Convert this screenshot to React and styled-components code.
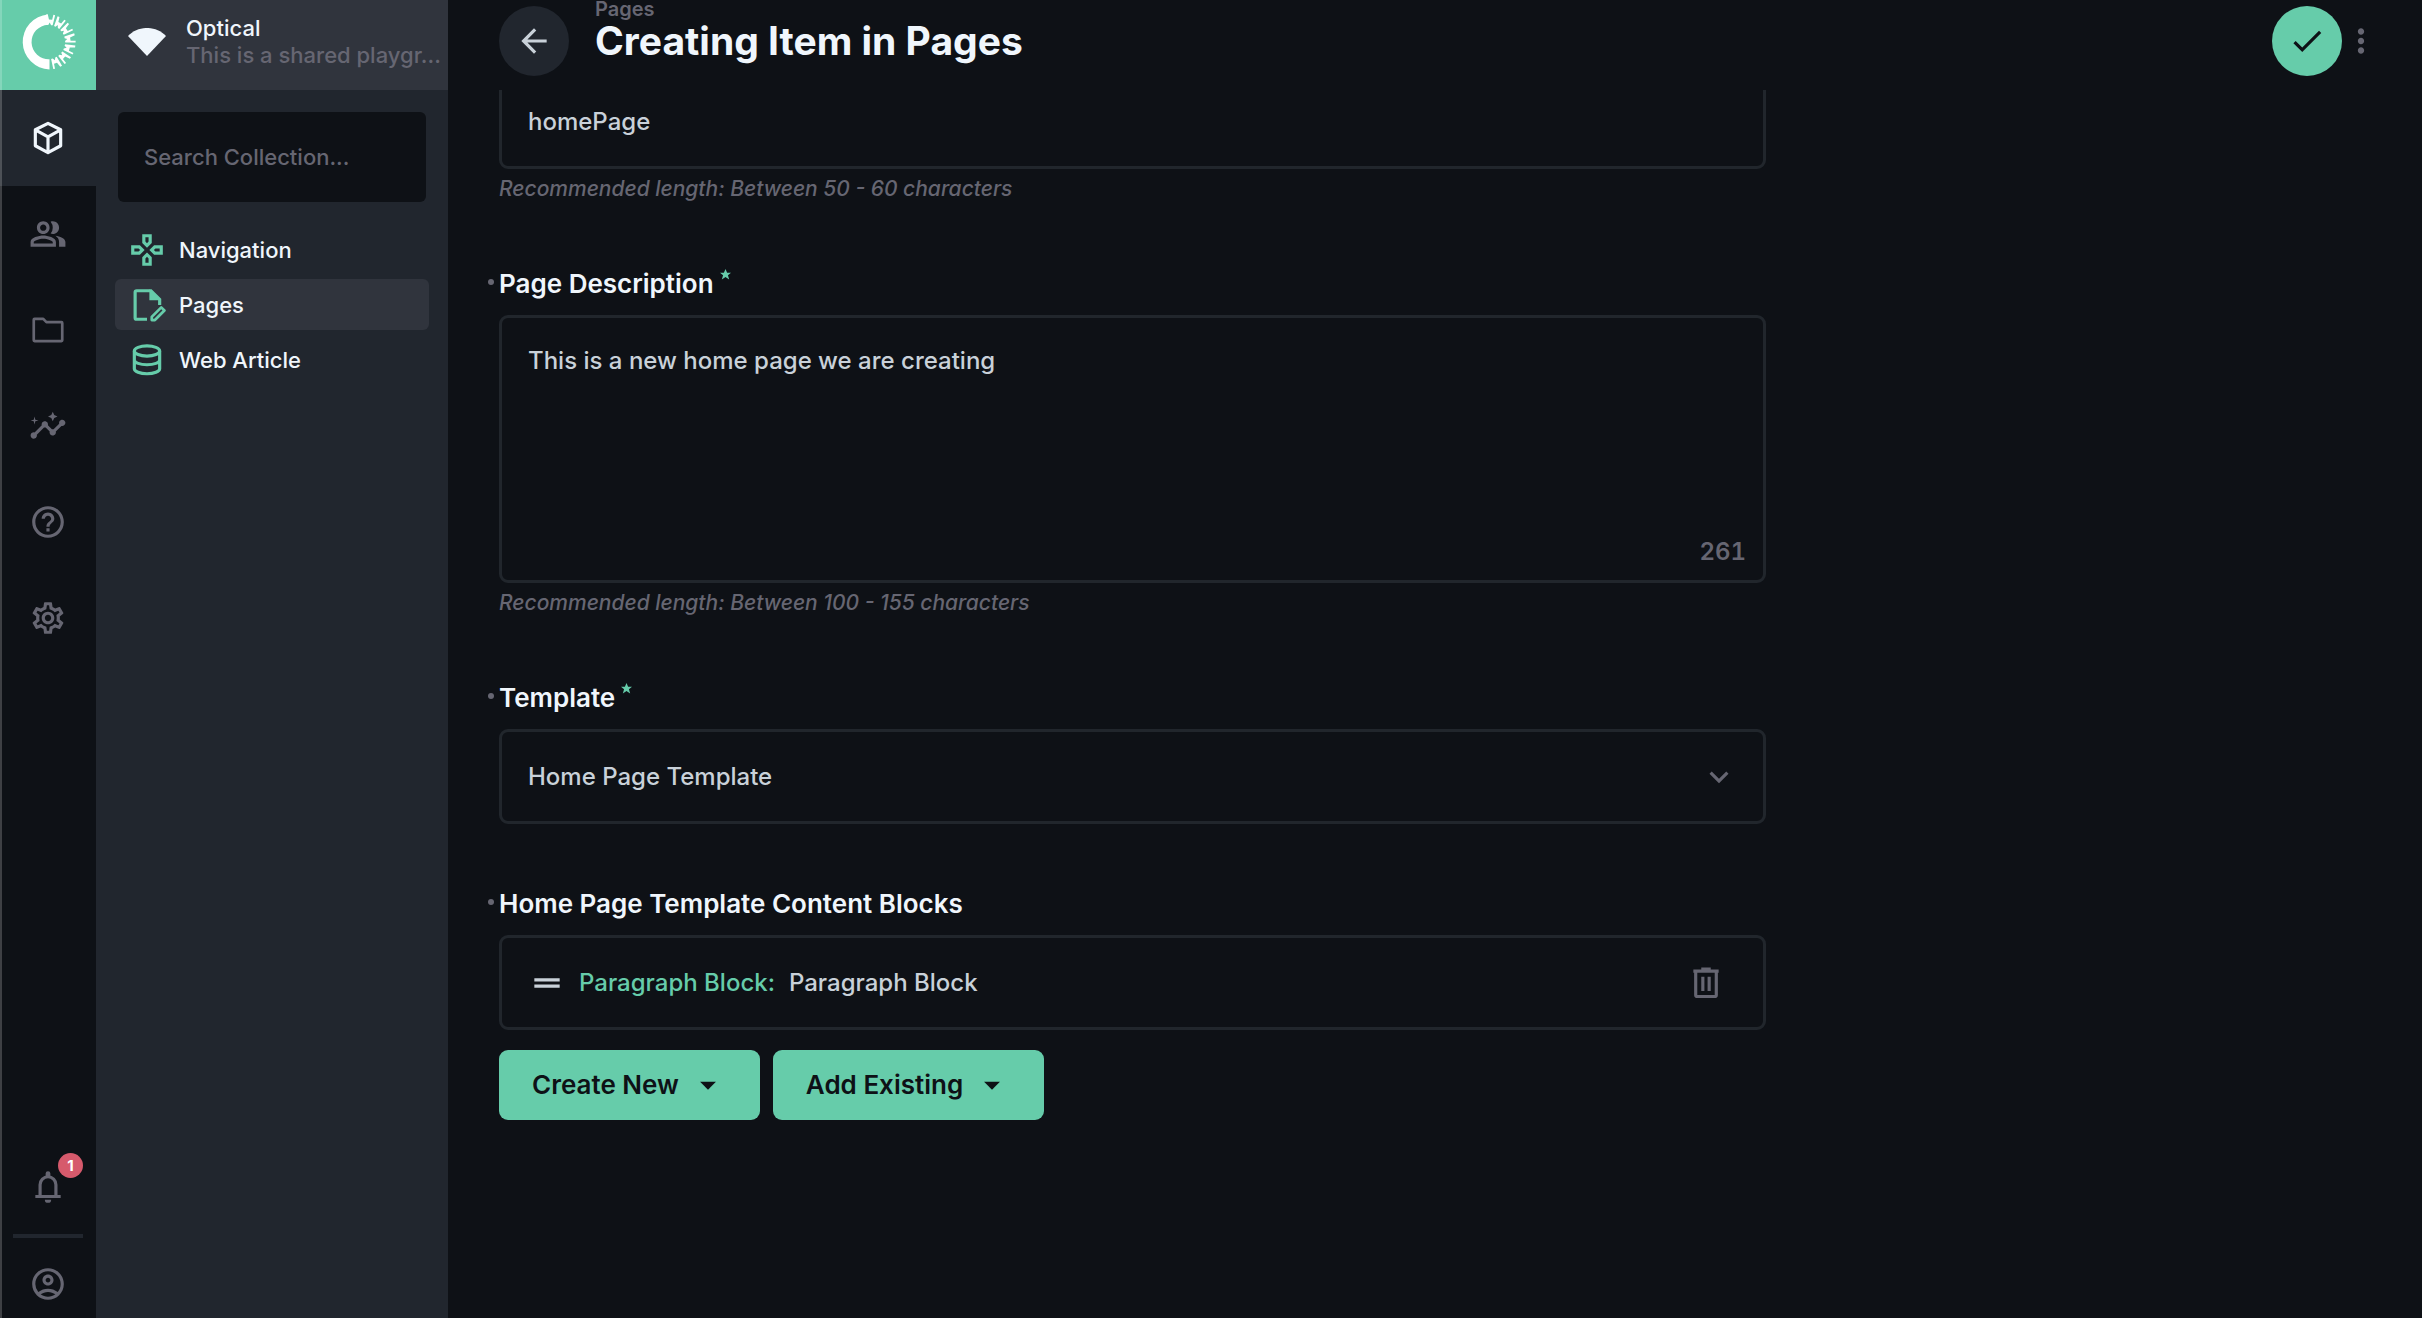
import { useState } from 'react';
import styled, { createGlobalStyle, css } from 'styled-components';
import {
    MdArrowBack,
    MdArrowDropDown,
    MdCheck,
    MdDragHandle,
    MdExpandMore,
    MdHelpOutline,
    MdInsights,
    MdMoreVert,
    MdOutlineAccountCircle,
    MdOutlineGamepad,
    MdOutlinePeopleAlt,
    MdOutlineSettings,
} from 'react-icons/md';

const GlobalStyle = createGlobalStyle`
    :root {
        --page: #0e1116;
        --subtle: #21262e;
        --normal: #30343d;
        --border: #21262c;
        --primary: #66ccaa;
        --danger: #d65a6c;
        --fg: #c9d1d9;
        --fg-strong: #f0f6fc;
        --fg-subdued: #666672;
    }

    * {
        box-sizing: border-box;
    }

    body {
        margin: 0;
        background: var(--page);
        color: var(--fg);
        font-family: Inter, 'Liberation Sans', sans-serif;
        font-size: 24px;
        font-weight: 500;
        line-height: 30px;
    }

    button,
    input,
    textarea,
    select {
        font: inherit;
        color: inherit;
        margin: 0;
    }

    button {
        border: 0;
        padding: 0;
        background: none;
        cursor: pointer;
    }

    svg {
        display: block;
        flex-shrink: 0;
    }
`;

const Layout = styled.div`
    display: grid;
    grid-template-columns: 96px 352px minmax(0, 1fr);
    height: 100vh;
    overflow: hidden;
`;

const WindowEdge = styled.div`
    position: fixed;
    inset: 0 auto 0 0;
    width: 2px;
    background: rgba(255, 255, 255, 0.2);
    pointer-events: none;
`;

/* Module bar */

const ModuleBar = styled.nav`
    display: flex;
    flex-direction: column;
    min-height: 0;
`;

const Logo = styled.a`
    display: flex;
    align-items: center;
    justify-content: center;
    height: 90px;
    padding-bottom: 6px;
    background: var(--primary);
    color: #fff;
`;

const ModuleLink = styled.a`
    display: flex;
    align-items: center;
    justify-content: center;
    height: 96px;
    color: var(--fg-subdued);

    ${({ $active }) =>
        $active &&
        css`
            background: var(--subtle);
            color: var(--fg-strong);
        `}
`;

const ModuleFooter = styled.div`
    margin-top: auto;
`;

const BellButton = styled.button`
    position: relative;
    display: flex;
    align-items: center;
    justify-content: center;
    width: 100%;
    height: 94px;
    color: var(--fg-subdued);
`;

const Badge = styled.span`
    position: absolute;
    top: 13px;
    right: 13px;
    width: 25px;
    height: 25px;
    border-radius: 50%;
    background: var(--danger);
    color: #fff;
    font-size: 15px;
    font-weight: 700;
    line-height: 25px;
    text-align: center;
`;

const Divider = styled.hr`
    height: 4px;
    margin: 0 13px;
    border: 0;
    background: var(--subtle);
`;

const AccountLink = styled.a`
    display: flex;
    justify-content: center;
    height: 80px;
    padding-top: 27px;
    color: var(--fg-subdued);
`;

/* Navigation */

const Sidebar = styled.aside`
    display: flex;
    flex-direction: column;
    min-width: 0;
    background: var(--subtle);
    font-size: 22px;
`;

const Project = styled.header`
    display: flex;
    align-items: center;
    gap: 20px;
    height: 90px;
    padding: 0 4px 6px 32px;
    background: var(--normal);
    color: var(--fg-strong);
`;

const ProjectText = styled.div`
    min-width: 0;
    line-height: 27px;
`;

const ProjectName = styled.div`
    color: var(--fg-strong);
`;

const ProjectNote = styled.div`
    color: var(--fg-subdued);
    white-space: nowrap;
`;

const Search = styled.input`
    height: 90px;
    margin: 22px 22px 0;
    padding: 0 26px;
    border: 0;
    border-radius: 6px;
    background: var(--page);

    &::placeholder {
        color: var(--fg-subdued);
        opacity: 1;
    }
`;

const CollectionList = styled.ul`
    display: flex;
    flex-direction: column;
    gap: 4px;
    margin: 22px 19px;
    padding: 0;
    list-style: none;
`;

const CollectionLink = styled.a`
    display: flex;
    align-items: center;
    gap: 13px;
    height: 51px;
    padding: 0 13px;
    border-radius: 6px;
    background: ${({ $active }) => ($active ? 'var(--normal)' : 'transparent')};
    color: var(--fg-strong);
    text-decoration: none;

    svg {
        color: var(--primary);
    }
`;

/* Main */

const Main = styled.main`
    display: flex;
    flex-direction: column;
    min-height: 0;
`;

const HeaderBar = styled.header`
    display: flex;
    align-items: center;
    flex-shrink: 0;
    height: 90px;
    padding: 0 42px 8px 51px;
`;

const RoundButton = styled.button`
    display: flex;
    align-items: center;
    justify-content: center;
    width: 70px;
    height: 70px;
    border-radius: 50%;
    background: ${({ $primary }) =>
        $primary ? 'var(--primary)' : 'var(--subtle)'};
    color: ${({ $primary }) => ($primary ? 'var(--page)' : 'var(--fg)')};
`;

const Titles = styled.div`
    flex: 1;
    margin: 0 26px 18px;
`;

const Breadcrumb = styled.a`
    display: block;
    color: var(--fg-subdued);
    font-size: 20px;
    font-weight: 600;
    line-height: 18px;
    text-decoration: none;
`;

const Title = styled.h1`
    margin: 0;
    color: var(--fg-strong);
    font-size: 39px;
    font-weight: 700;
    line-height: 46px;
`;

const MenuButton = styled.button`
    color: var(--fg-subdued);
`;

const Scroller = styled.div`
    flex: 1;
    min-height: 0;
    overflow: hidden;
`;

const Form = styled.form`
    display: flex;
    flex-direction: column;
    gap: 65px;
    max-width: 1369px;
    margin-top: -16px;
    padding: 0 51px;
`;

const Field = styled.div`
    display: flex;
    flex-direction: column;
`;

const Label = styled.label`
    position: relative;
    display: flex;
    gap: 6px;
    margin-bottom: 16px;
    color: var(--fg-strong);
    font-size: 26px;
    font-weight: 600;

    &::before {
        content: '';
        position: absolute;
        top: 10px;
        left: -11px;
        width: 6px;
        height: 6px;
        border-radius: 50%;
        background: var(--fg-subdued);
    }

    svg {
        color: var(--primary);
    }
`;

const control = css`
    width: 100%;
    border: 3px solid var(--border);
    border-radius: 9px;
    background: transparent;
    outline: 0;
`;

const TextInput = styled.input`
    ${control}
    height: 95px;
    padding: 0 26px;
`;

const TextAreaBox = styled.div`
    ${control}
    display: flex;
    flex-direction: column;
    height: 268px;
`;

const TextArea = styled.textarea`
    flex: 1;
    padding: 28px 26px 0;
    border: 0;
    outline: 0;
    background: transparent;
    resize: none;
`;

const Counter = styled.span`
    align-self: flex-end;
    padding: 0 17px 13px;
    color: var(--fg-subdued);
    font-weight: 600;
    font-variant-numeric: tabular-nums;
`;

const Hint = styled.small`
    margin-top: 4px;
    color: var(--fg-subdued);
    font-size: 21px;
    font-style: italic;
    line-height: 31px;
`;

const SelectBox = styled.div`
    ${control}
    display: grid;
    align-items: center;
    height: 95px;

    > * {
        grid-area: 1 / 1;
    }

    svg {
        justify-self: end;
        margin-right: 25px;
        color: var(--fg-subdued);
        pointer-events: none;
    }
`;

const Select = styled.select`
    width: 100%;
    height: 89px;
    padding: 0 26px;
    border: 0;
    outline: 0;
    appearance: none;
    background: transparent;
`;

const Block = styled.div`
    ${control}
    display: flex;
    align-items: center;
    height: 95px;
    padding: 0 38px 0 26px;
`;

const BlockType = styled.span`
    margin: 0 14px 0 13px;
    color: var(--primary);
`;

const DeleteButton = styled.button`
    margin-left: auto;
    color: var(--fg-subdued);
`;

const Actions = styled.div`
    display: flex;
    gap: 13px;
    margin-top: 20px;
`;

const ActionButton = styled.button`
    display: flex;
    align-items: center;
    gap: 10px;
    height: 70px;
    padding: 0 33px;
    border-radius: 9px;
    background: var(--primary);
    color: var(--page);
    font-size: 26px;
    font-weight: 600;
`;

/* Icons */

function Svg({ size = 38, children }) {
    return (
        <svg
            width={size}
            height={size}
            viewBox="0 0 24 24"
            fill="none"
            stroke="currentColor"
            strokeWidth="2"
            aria-hidden="true"
        >
            {children}
        </svg>
    );
}

// angles in degrees from the top, clockwise
const rays = [5, 30, 55, 81, 107, 133, 159];

function RingLogo() {
    return (
        <svg width="56" height="56" viewBox="-28 -28 56 56" aria-hidden="true">
            <path
                d="M0 -27.500A27.500 27.500 0 0 0 1.500 27.400V17.200A17.200 17.200 0 0 1 0 -17.200Z"
                fill="currentColor"
            />
            {rays.map((angle) => (
                <path
                    key={angle}
                    d="M-4.600 -27.200L-2.600 -27.500L-1 -22.500L2.200 -22.500L3 -27.500L4.800 -27.200L3.200 -17H1.600L0 -19.500L-1.200 -17H-2.800Z"
                    transform={`rotate(${angle})`}
                    fill="currentColor"
                />
            ))}
        </svg>
    );
}

function WifiIcon() {
    return (
        <svg width="38" height="28" viewBox="0 0 38 28" aria-hidden="true">
            <path d="M0 8C10 -2.700 28 -2.700 38 8L19 28Z" fill="currentColor" />
        </svg>
    );
}

function CubeIcon() {
    return (
        <Svg>
            <path
                d="M12 2.800L20 6.800V16.900L12 21.200L4 16.900V6.800ZM4.300 7L12 11.300L19.700 7M12 11.300V21"
                strokeLinejoin="round"
            />
        </Svg>
    );
}

function FolderIcon() {
    return (
        <Svg>
            <path
                d="M3 5.500Q3 5 3.500 5H9L11 7H20.500Q21 7 21 7.500V18.500Q21 19 20.500 19H3.500Q3 19 3 18.500Z"
                strokeWidth="1.700"
                strokeLinejoin="round"
            />
        </Svg>
    );
}

function BellIcon() {
    return (
        <Svg>
            <path d="M7 18V10.500A5 5 0 0 1 17 10.500V18M4 18H20" />
            <path
                d="M10.500 5V3.500A1.500 1.500 0 0 1 13.500 3.500V5ZM10 20H14A2 2 0 0 1 10 20Z"
                fill="currentColor"
                stroke="none"
            />
        </Svg>
    );
}

function EditDocumentIcon() {
    return (
        <Svg>
            <path d="M12 21H5.500Q4.500 21 4.500 20V4Q4.500 3 5.500 3H14.500L20 8.500V12" />
            <path d="M13.500 2V9H20.500Z" fill="currentColor" stroke="none" />
            <path
                d="M15 21.500V19.500L21 13.500L23 15.500L17 21.500Z"
                strokeWidth="1.700"
                strokeLinejoin="round"
            />
        </Svg>
    );
}

function DatabaseIcon() {
    return (
        <Svg>
            <ellipse cx="12" cy="6.300" rx="8" ry="3.200" />
            <path d="M4 6.500V17.500C4 19.300 7.600 20.700 12 20.700S20 19.300 20 17.500V6.500M4 12C4 13.700 7.600 15 12 15S20 13.700 20 12" />
        </Svg>
    );
}

function TrashIcon() {
    return (
        <Svg>
            <path
                d="M5.500 5V19.500Q5.500 20.500 6.500 20.500H17.500Q18.500 20.500 18.500 19.500V5M4 4.500H20M9 3.200H15"
            />
            <path d="M10 8V17M14 8V17" />
        </Svg>
    );
}

function RequiredStar() {
    return (
        <svg width="11" height="11" viewBox="0 0 24 24" aria-label="required">
            <path
                d="M12 0L15.500 8H24L17.300 13.500L20 23L12 17.500L4 23L6.700 13.500L0 8H8.500Z"
                fill="currentColor"
            />
        </svg>
    );
}

const modules = [
    { name: 'Content', Icon: CubeIcon, active: true },
    { name: 'User Directory', Icon: MdOutlinePeopleAlt },
    { name: 'File Library', Icon: FolderIcon },
    { name: 'Insights', Icon: MdInsights },
    { name: 'Documentation', Icon: MdHelpOutline },
    { name: 'Settings', Icon: MdOutlineSettings },
];

const collections = [
    { name: 'Navigation', Icon: MdOutlineGamepad },
    { name: 'Pages', Icon: EditDocumentIcon, active: true },
    { name: 'Web Article', Icon: DatabaseIcon },
];

function App() {
    const [title, setTitle] = useState('homePage');
    const [description, setDescription] = useState(
        'This is a new home page we are creating'
    );

    return (
        <>
            <GlobalStyle />
            <Layout>
                <ModuleBar aria-label="Modules">
                    <Logo href="#" aria-label="Home">
                        <RingLogo />
                    </Logo>
                    {modules.map(({ name, Icon, active }) => (
                        <ModuleLink
                            key={name}
                            href="#"
                            aria-label={name}
                            $active={active}
                        >
                            <Icon size={38} />
                        </ModuleLink>
                    ))}
                    <ModuleFooter>
                        <BellButton type="button" aria-label="Notifications">
                            <BellIcon />
                            <Badge>1</Badge>
                        </BellButton>
                        <Divider />
                        <AccountLink href="#" aria-label="Account">
                            <MdOutlineAccountCircle size={38} />
                        </AccountLink>
                    </ModuleFooter>
                </ModuleBar>

                <Sidebar>
                    <Project>
                        <WifiIcon />
                        <ProjectText>
                            <ProjectName>Optical</ProjectName>
                            <ProjectNote>This is a shared playgr...</ProjectNote>
                        </ProjectText>
                    </Project>
                    <Search
                        type="search"
                        aria-label="Search Collection"
                        placeholder="Search Collection..."
                    />
                    <CollectionList>
                        {collections.map(({ name, Icon, active }) => (
                            <li key={name}>
                                <CollectionLink href="#" $active={active}>
                                    <Icon size={38} />
                                    {name}
                                </CollectionLink>
                            </li>
                        ))}
                    </CollectionList>
                </Sidebar>

                <Main>
                    <HeaderBar>
                        <RoundButton type="button" aria-label="Back">
                            <MdArrowBack size={38} />
                        </RoundButton>
                        <Titles>
                            <Breadcrumb href="#">Pages</Breadcrumb>
                            <Title>Creating Item in Pages</Title>
                        </Titles>
                        <RoundButton type="button" $primary aria-label="Save">
                            <MdCheck size={38} />
                        </RoundButton>
                        <MenuButton type="button" aria-label="More options">
                            <MdMoreVert size={38} />
                        </MenuButton>
                    </HeaderBar>

                    <Scroller>
                        <Form>
                            <Field>
                                <TextInput
                                    aria-label="Page Title"
                                    value={title}
                                    onChange={(e) => setTitle(e.target.value)}
                                />
                                <Hint>
                                    Recommended length: Between 50 - 60
                                    characters
                                </Hint>
                            </Field>

                            <Field>
                                <Label htmlFor="description">
                                    Page Description
                                    <RequiredStar />
                                </Label>
                                <TextAreaBox>
                                    <TextArea
                                        id="description"
                                        value={description}
                                        onChange={(e) =>
                                            setDescription(e.target.value)
                                        }
                                    />
                                    <Counter>{300 - description.length}</Counter>
                                </TextAreaBox>
                                <Hint>
                                    Recommended length: Between 100 - 155
                                    characters
                                </Hint>
                            </Field>

                            <Field>
                                <Label htmlFor="template">
                                    Template
                                    <RequiredStar />
                                </Label>
                                <SelectBox>
                                    <Select id="template">
                                        <option>Home Page Template</option>
                                    </Select>
                                    <MdExpandMore size={38} />
                                </SelectBox>
                            </Field>

                            <Field>
                                <Label as="div">
                                    Home Page Template Content Blocks
                                </Label>
                                <Block>
                                    <MdDragHandle size={38} />
                                    <BlockType>Paragraph Block:</BlockType>
                                    <span>Paragraph Block</span>
                                    <DeleteButton
                                        type="button"
                                        aria-label="Delete block"
                                    >
                                        <TrashIcon />
                                    </DeleteButton>
                                </Block>
                                <Actions>
                                    <ActionButton type="button">
                                        Create New
                                        <MdArrowDropDown size={38} />
                                    </ActionButton>
                                    <ActionButton type="button">
                                        Add Existing
                                        <MdArrowDropDown size={38} />
                                    </ActionButton>
                                </Actions>
                            </Field>
                        </Form>
                    </Scroller>
                </Main>
            </Layout>
            <WindowEdge />
        </>
    );
}

export default App;
